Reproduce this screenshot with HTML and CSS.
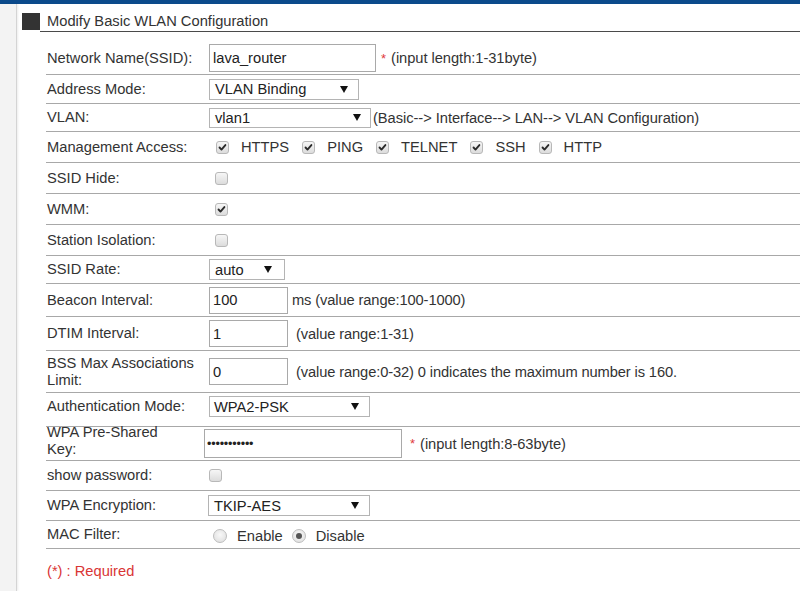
FILE: index.html
```html
<!DOCTYPE html>
<html>
<head>
<meta charset="utf-8">
<link rel="stylesheet" href="styles.css">
</head>
<body>
<div class="topbar"></div>
<div class="page">
  <aside class="side"></aside>
  <main class="main">
    <div class="head">
      <span class="head-mark"></span>
      <h1 class="head-title">Modify Basic WLAN Configuration</h1>
    </div>
    <div class="form">
      <div class="row r-first">
        <div class="label">Network Name(SSID):</div>
        <div class="val">
          <input class="txt w-ssid" type="text" value="lava_router">
          <span class="star">*</span><span class="hint">(input length:1-31byte)</span>
        </div>
      </div>
      <div class="row h29">
        <div class="label">Address Mode:</div>
        <div class="val"><span class="sel w-addr"><span>VLAN Binding</span><svg class="arr" viewBox="0 0 8 7"><path d="M0 0H8L4 7Z"/></svg></span></div>
      </div>
      <div class="row h28">
        <div class="label">VLAN:</div>
        <div class="val"><span class="sel w-vlan"><span>vlan1</span><svg class="arr" viewBox="0 0 8 7"><path d="M0 0H8L4 7Z"/></svg></span><span class="hint tight">(Basic--&gt; Interface--&gt; LAN--&gt; VLAN Configuration)</span></div>
      </div>
      <div class="row h31">
        <div class="label">Management Access:</div>
        <div class="val checks">
          <span class="item"><span class="cb on"><svg viewBox="0 0 13 13"><path d="M3 6.5L5.3 8.9L9.9 3.6" /></svg></span>HTTPS</span>
          <span class="item"><span class="cb on"><svg viewBox="0 0 13 13"><path d="M3 6.5L5.3 8.9L9.9 3.6" /></svg></span>PING</span>
          <span class="item"><span class="cb on"><svg viewBox="0 0 13 13"><path d="M3 6.5L5.3 8.9L9.9 3.6" /></svg></span>TELNET</span>
          <span class="item"><span class="cb on"><svg viewBox="0 0 13 13"><path d="M3 6.5L5.3 8.9L9.9 3.6" /></svg></span>SSH</span>
          <span class="item"><span class="cb on"><svg viewBox="0 0 13 13"><path d="M3 6.5L5.3 8.9L9.9 3.6" /></svg></span>HTTP</span>
        </div>
      </div>
      <div class="row h31">
        <div class="label">SSID Hide:</div>
        <div class="val"><span class="cb solo"></span></div>
      </div>
      <div class="row h31">
        <div class="label">WMM:</div>
        <div class="val"><span class="cb solo on"><svg viewBox="0 0 13 13"><path d="M3 6.5L5.3 8.9L9.9 3.6" /></svg></span></div>
      </div>
      <div class="row h31">
        <div class="label">Station Isolation:</div>
        <div class="val"><span class="cb solo"></span></div>
      </div>
      <div class="row h28">
        <div class="label">SSID Rate:</div>
        <div class="val"><span class="sel w-rate"><span>auto</span><svg class="arr" viewBox="0 0 8 7"><path d="M0 0H8L4 7Z"/></svg></span></div>
      </div>
      <div class="row h33">
        <div class="label">Beacon Interval:</div>
        <div class="val"><input class="txt w-num" type="text" value="100"><span class="hint near">ms (value range:100-1000)</span></div>
      </div>
      <div class="row h34">
        <div class="label">DTIM Interval:</div>
        <div class="val"><input class="txt w-num" type="text" value="1"><span class="hint">(value range:1-31)</span></div>
      </div>
      <div class="row h42">
        <div class="label">BSS Max Associations Limit:</div>
        <div class="val"><input class="txt w-num" type="text" value="0"><span class="hint">(value range:0-32) 0 indicates the maximum number is 160.</span></div>
      </div>
      <div class="row h34 pb">
        <div class="label">Authentication Mode:</div>
        <div class="val"><span class="sel w-auth"><span>WPA2-PSK</span><svg class="arr" viewBox="0 0 8 7"><path d="M0 0H8L4 7Z"/></svg></span></div>
      </div>
      <div class="row h34">
        <div class="label narrow">WPA Pre-Shared Key:</div>
        <div class="val shift"><input class="txt w-key pw" type="text" value="•••••••••••"><span class="star wide">*</span><span class="hint">(input length:8-63byte)</span></div>
      </div>
      <div class="row h30">
        <div class="label">show password:</div>
        <div class="val"><span class="cb solo2"></span></div>
      </div>
      <div class="row h30">
        <div class="label">WPA Encryption:</div>
        <div class="val"><span class="sel w-enc"><span>TKIP-AES</span><svg class="arr" viewBox="0 0 8 7"><path d="M0 0H8L4 7Z"/></svg></span></div>
      </div>
      <div class="row h28">
        <div class="label">MAC Filter:</div>
        <div class="val radios">
          <span class="ritem"><span class="rd"></span>Enable</span>
          <span class="ritem"><span class="rd on"></span>Disable</span>
        </div>
      </div>
      <p class="req">(*) : Required</p>
    </div>
  </main>
</div>
</body>
</html>
```

FILE: styles.css
```css
* { box-sizing: border-box; }
html, body { margin: 0; padding: 0; background: #fff; }
body {
  font-family: "Liberation Sans", Arial, sans-serif;
  font-size: 14.7px;
  color: #333;
  width: 800px;
  height: 591px;
  overflow: hidden;
}
.topbar { height: 4px; background: #0b4a8b; }
.page { display: flex; height: 587px; }
.side {
  width: 17px;
  flex: none;
  background: #f3f3f3;
  border-right: 1px solid #d4d4d4;
  box-shadow: 1px 0 2px rgba(0,0,0,0.08);
}
.main { flex: 1; padding-left: 5px; }
.head { display: flex; align-items: flex-end; height: 28px; }
.head-mark { width: 18px; height: 17px; background: #333; margin-bottom: 2px; flex: none; }
.head-title {
  flex: 1;
  margin: 0;
  font-weight: normal;
  font-size: 14.7px;
  color: #333;
  padding-left: 7px;
  line-height: 20px;
  padding-bottom: 0;
  border-bottom: 1px solid #4a4a4a;
}
.form { margin-left: 24px; }
.row {
  display: flex;
  align-items: center;
  border-bottom: 1px solid #a8a8a8;
  padding-left: 1px;
}
.r-first { height: 43px; padding-top: 10px; }
.h28 { height: 28px; }
.h29 { height: 29px; }
.h30 { height: 30px; }
.h31 { height: 31px; }
.h33 { height: 33px; }
.h34 { height: 34px; }
.h42 { height: 42px; }
.pb { padding-bottom: 6px; }
.label { width: 162px; flex: none; line-height: 17px; padding-right: 12px; }
.label.narrow { width: 157px; padding-right: 40px; margin-top: -5px; }
.val { display: flex; align-items: center; white-space: nowrap; }
.txt {
  font-family: "Liberation Sans", Arial, sans-serif;
  font-size: 14.7px;
  color: #222;
  height: 27px;
  border: 1px solid #a9a9a9;
  padding: 0 3px;
  margin: 0;
  background: #fff;
  outline: none;
}
.w-ssid { width: 167px; height: 28px; }
.w-num { width: 79px; }
.w-key { width: 198px; height: 29px; }
.pw { font-size: 12.6px; letter-spacing: -0.2px; padding-left: 2px; }
.star { color: #e0393a; margin-left: 5px; font-size: 13px; }
.star.wide { margin-left: 8px; }
.hint { margin-left: 5px; color: #333; letter-spacing: -0.05px; }
.hint.near { margin-left: 4px; }
.hint.tight { margin-left: 2px; }
.val .txt + .hint { margin-left: 8px; letter-spacing: -0.12px; }
.val .txt + .hint.near { margin-left: 4px; }
.sel {
  display: inline-flex;
  align-items: center;
  justify-content: space-between;
  height: 21px;
  border: 1px solid #b4b4b4;
  background: #fff;
  padding: 0 9px 0 5px;
  color: #222;
}
.sel .arr { width: 8px; height: 7px; fill: #111; }
.w-addr { width: 150px; padding-right: 10px; }
.w-vlan { width: 162px; height: 20px; }
.w-rate { width: 76px; padding-right: 12px; height: 21px; }
.w-auth { width: 161px; padding-left: 4px; padding-right: 10px; }
.w-enc { width: 162px; padding-left: 5px; padding-right: 10px; margin-left: -1px; }
.cb {
  display: inline-block;
  width: 13px;
  height: 13px;
  border: 1px solid #b8b8b8;
  border-radius: 3px;
  background: linear-gradient(#f6f6f6, #dcdcdc);
  flex: none;
  position: relative;
}
.cb svg { display: block; width: 11px; height: 11px; }
.cb svg path { fill: none; stroke: #2a2a2a; stroke-width: 2.2; stroke-linecap: round; stroke-linejoin: round; }
.solo { margin-left: 6px; }
.solo2 { margin-left: 0; }
.checks { gap: 0; margin-left: 7px; }
.item { display: inline-flex; align-items: center; margin-right: 13px; }
.item .cb { margin-right: 12px; }
.radios { margin-left: 4px; margin-top: 3px; }
.ritem { display: inline-flex; align-items: center; margin-right: 9px; }
.rd {
  display: inline-block;
  width: 14px;
  height: 14px;
  border-radius: 50%;
  border: 1px solid #bdbdbd;
  background: radial-gradient(circle at 50% 40%, #f8f8f8, #dcdcdc);
  margin-right: 10px;
  position: relative;
}
.rd.on::after {
  content: "";
  position: absolute;
  left: 3px;
  top: 3px;
  width: 6px;
  height: 6px;
  border-radius: 50%;
  background: #555;
}
.req { margin: 0; padding: 14px 0 0 1px; color: #d93535; line-height: 17px; }
```
